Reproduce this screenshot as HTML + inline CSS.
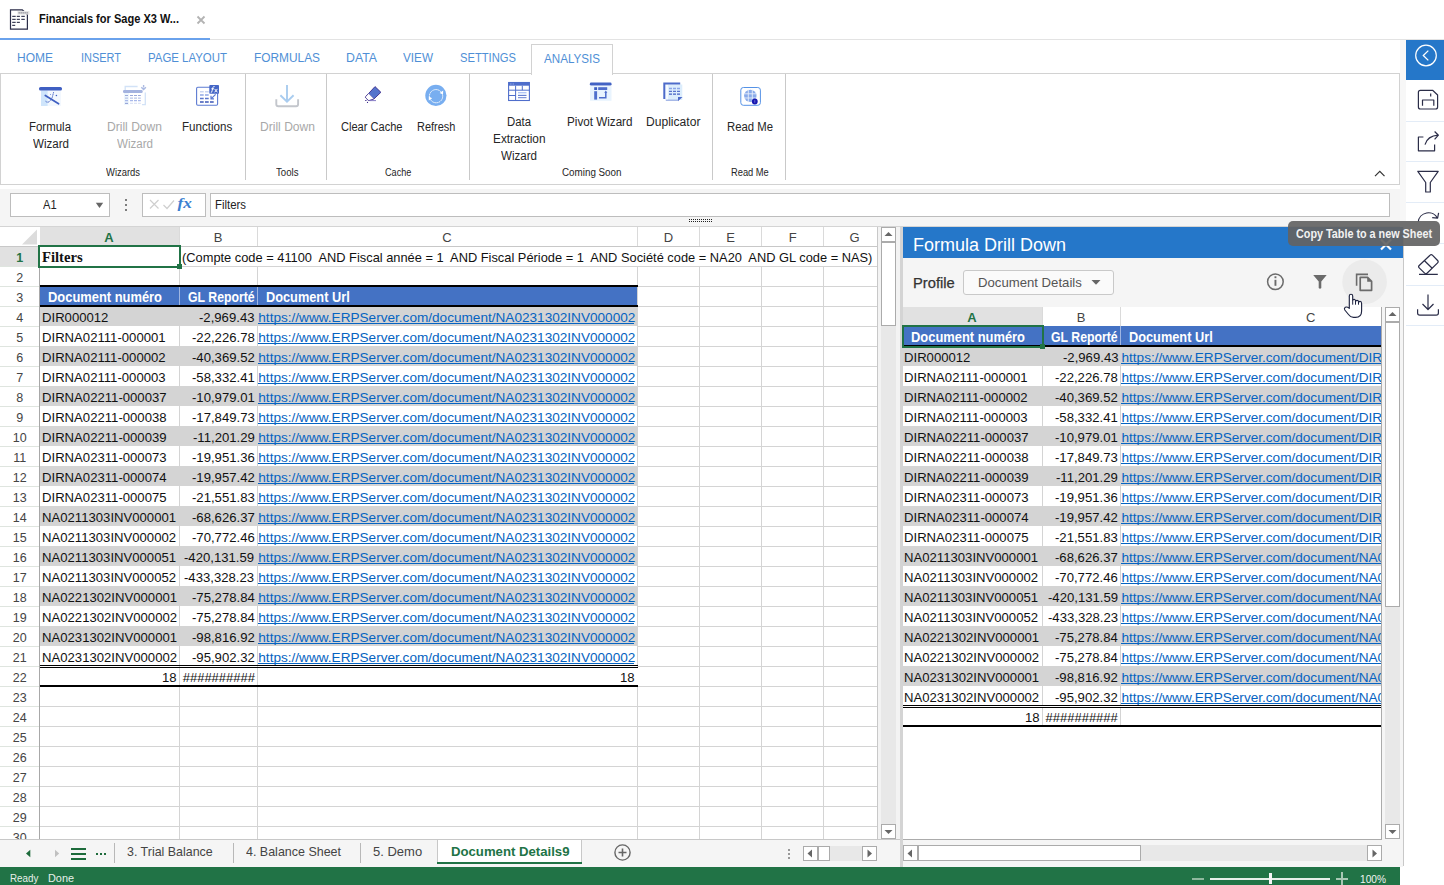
<!DOCTYPE html><html><head><meta charset="utf-8"><title>Financials</title><style>
*{box-sizing:border-box;margin:0;padding:0}
html,body{width:1444px;height:885px;overflow:hidden;background:#fff}
body{position:relative;font-family:"Liberation Sans",sans-serif}
.a{position:absolute}
.t{position:absolute;white-space:pre}
svg{position:absolute;overflow:visible}
</style></head><body><svg style="left:8px;top:7px" width="24" height="25" viewBox="8 7 24 25"><path d="M10.5 9.8 H22.3 L27.4 14.6 V29.1 H10.5 Z" fill="#fff" stroke="#2b2d48" stroke-width="1.2"/><rect x="17.5" y="11" width="12" height="3.6" fill="#e4e4e4"/><g fill="#8a8a96"><rect x="18.5" y="12.2" width="1.3" height="1.3"/><rect x="20.5" y="12.2" width="1.3" height="1.3"/><rect x="22.5" y="12.2" width="1.3" height="1.3"/><rect x="24.5" y="12.2" width="1.3" height="1.3"/><rect x="26.5" y="12.2" width="1.3" height="1.3"/></g><g fill="#2b2d48"><rect x="12.2" y="15.8" width="3.5" height="1.1"/><rect x="16.8" y="15.8" width="3.1" height="1.1"/><rect x="21.3" y="15.8" width="3.5" height="1.1"/><rect x="12.2" y="18.8" width="3.5" height="1.1"/><rect x="16.8" y="18.8" width="3.1" height="1.1"/><rect x="21.3" y="18.8" width="3.5" height="1.1"/><rect x="12.2" y="21.8" width="3.5" height="1.1"/><rect x="16.8" y="21.8" width="3.1" height="1.1"/><rect x="12.2" y="24.8" width="3" height="1.1"/></g></svg>
<div class="t " style="left:39.00px;top:12.84px;font-size:12px;line-height:12px;color:#111;font-weight:bold;transform:scaleX(0.9208);transform-origin:0 0;font-family:'Liberation Sans',sans-serif;">Financials for Sage X3 W...</div>
<svg style="left:196px;top:15px" width="10" height="10" viewBox="0 0 10 10"><path d="M1.5 1.5 L8.5 8.5 M8.5 1.5 L1.5 8.5" stroke="#b3b3b3" stroke-width="1.8"/></svg>
<div class="a" style="left:0px;top:39px;width:1444px;height:1px;background:#e3e3e3"></div>
<div class="a" style="left:0px;top:38px;width:210px;height:2px;background:#6aa2ec"></div>
<div class="t " style="left:17.00px;top:51.84px;font-size:12px;line-height:12px;color:#4f8fd6;font-family:'Liberation Sans',sans-serif;">HOME</div>
<div class="t " style="left:80.50px;top:51.84px;font-size:12px;line-height:12px;color:#4f8fd6;transform:scaleX(0.9135);transform-origin:0 0;font-family:'Liberation Sans',sans-serif;">INSERT</div>
<div class="t " style="left:148.00px;top:51.84px;font-size:12px;line-height:12px;color:#4f8fd6;transform:scaleX(0.9528);transform-origin:0 0;font-family:'Liberation Sans',sans-serif;">PAGE LAYOUT</div>
<div class="t " style="left:253.50px;top:51.84px;font-size:12px;line-height:12px;color:#4f8fd6;transform:scaleX(0.9899);transform-origin:0 0;font-family:'Liberation Sans',sans-serif;">FORMULAS</div>
<div class="t " style="left:346.00px;top:51.84px;font-size:12px;line-height:12px;color:#4f8fd6;transform:scaleX(1.0257);transform-origin:0 0;font-family:'Liberation Sans',sans-serif;">DATA</div>
<div class="t " style="left:403.00px;top:51.84px;font-size:12px;line-height:12px;color:#4f8fd6;transform:scaleX(0.9781);transform-origin:0 0;font-family:'Liberation Sans',sans-serif;">VIEW</div>
<div class="t " style="left:460.00px;top:51.84px;font-size:12px;line-height:12px;color:#4f8fd6;transform:scaleX(0.9332);transform-origin:0 0;font-family:'Liberation Sans',sans-serif;">SETTINGS</div>
<div class="a" style="left:531px;top:44px;width:82px;height:31px;background:#fff;border:1px solid #d2d2d2;border-bottom:none;z-index:2"></div>
<div class="t " style="left:544.00px;top:52.84px;font-size:12px;line-height:12px;color:#4f8fd6;transform:scaleX(0.9688);transform-origin:0 0;font-family:'Liberation Sans',sans-serif;z-index:3">ANALYSIS</div>
<div class="a" style="left:0px;top:73px;width:1400px;height:112px;border:1px solid #d2d2d2;background:#fff;z-index:1"></div>
<div class="a" style="left:245px;top:74px;width:1px;height:106px;background:#c9c9c9;z-index:1"></div>
<div class="a" style="left:326px;top:74px;width:1px;height:106px;background:#c9c9c9;z-index:1"></div>
<div class="a" style="left:469px;top:74px;width:1px;height:106px;background:#c9c9c9;z-index:1"></div>
<div class="a" style="left:712px;top:74px;width:1px;height:106px;background:#c9c9c9;z-index:1"></div>
<div class="a" style="left:785px;top:74px;width:1px;height:106px;background:#c9c9c9;z-index:1"></div>
<svg style="left:36px;top:84px;z-index:2;" width="30" height="26" viewBox="36 84 30 26"><rect x="41" y="90.5" width="6.8" height="15.5" fill="#cfe5fb"/><rect x="47.8" y="90.5" width="13.2" height="15.5" fill="#f3f8fe"/><rect x="39" y="87" width="23" height="3.6" rx="1.6" fill="#3f5fc2"/><path d="M45.3 95.5 L58.6 103.8" stroke="#3f5fc2" stroke-width="1.7" stroke-linecap="round"/><path d="M45.5 101.2 Q47 102.8 49 101.8 Q51.5 100 52.5 96.5 L53.6 92.2" stroke="#4a68c8" stroke-width="1" stroke-dasharray="1.6 0.6" fill="none"/><circle cx="56.4" cy="95.5" r="0.8" fill="#3f5fc2"/><circle cx="50.5" cy="94.4" r="0.5" fill="#6a85d6"/></svg>
<svg style="left:120px;top:82px;z-index:2;" width="30" height="26" viewBox="120 82 30 26"><rect x="124" y="93" width="5" height="12" fill="#eef6fd"/><path d="M125.2 90 V86.5 H137.6" stroke="#d2e2f7" stroke-width="1.3" fill="none"/><rect x="123" y="90" width="19.7" height="2.9" rx="1.2" fill="#a4b3df"/><path d="M143.6 85 V87.6 M141.3 87.3 L143.6 89.6 L145.9 87.3" stroke="#abbae2" stroke-width="1.4" fill="none"/><path d="M145.3 92.5 V104.7 H142" stroke="#d2e2f7" stroke-width="1.3" fill="none"/><g stroke-width="1.2"><path d="M125 95.5h3M130 95.5h3M134 95.5h3M138 95.5h2.8" stroke="#9ba9da"/><path d="M125 98.2h3M130 98.2h3M134 98.2h3M138 98.2h2.8" stroke="#b8c5e7"/><path d="M125 100.6h3M130 100.6h3M134 100.6h3M138 100.6h2.8" stroke="#a9b9ea"/><path d="M125 103.4h3" stroke="#98a6d8"/><path d="M130 103.4h3M134 103.4h3M138 103.4h2.8" stroke="#dfe5f5"/></g></svg>
<svg style="left:193px;top:82px;z-index:2;" width="30" height="26" viewBox="193 82 30 26"><rect x="196.6" y="87.3" width="21" height="18" rx="1.2" fill="#fff" stroke="#5c7bd2" stroke-width="1.1"/><g stroke-width="1.5"><path d="M200 91.7h3.7M205 91.7h3.7" stroke="#c9d5f1"/><path d="M200 95h3.7M205 95h3.7" stroke="#8ea7e5"/><path d="M200 98.6h3.7M205 98.6h3.7" stroke="#5a76cc"/><path d="M200 102h3.7M205 102h3.7M210 102h3.7" stroke="#3b56b6"/></g><path d="M215.6 94.3 L211.3 98.6 M211 95.8 V98.8 H214" stroke="#5a79d2" stroke-width="1.2" fill="none"/><rect x="209.3" y="85.1" width="9.7" height="8.6" rx="0.8" fill="#4566c6"/><path d="M210.8 92.6 Q211.8 92.8 212.2 90.5 L212.9 87.6 Q213.3 86.2 214.6 86.6 M211.3 88.8 H214" stroke="#fff" stroke-width="0.95" fill="none"/><path d="M214.6 88.9 L217.4 92.3 M217.4 88.9 L214.6 92.3" stroke="#fff" stroke-width="1"/></svg>
<svg style="left:272px;top:82px;z-index:2;" width="30" height="28" viewBox="272 82 30 28"><path d="M276.3 99.3 V104.3 Q276.3 106.3 278.3 106.3 H296.1 Q298.1 106.3 298.1 104.3 V99.3" stroke="#c3c6cc" stroke-width="1.9" fill="none"/><path d="M287 85 V101 M280.4 95.3 L287 101.7 L293.6 95.3" stroke="#a9ccef" stroke-width="1.9" fill="none"/></svg>
<svg style="left:360px;top:82px;z-index:2;" width="26" height="24" viewBox="360 82 26 24"><path d="M368.5 93.6 L375 86.6 L380.9 92.3 L373.9 99 Z" fill="#5574cc" stroke="#3d2d8c" stroke-width="0.9" stroke-linejoin="round"/><path d="M368.5 93.6 L365.7 96.4 Q365 97.2 365.8 98 L368.2 100.3 Q369 101 369.8 100.3 L373.9 99" fill="#fff" stroke="#3d2d8c" stroke-width="0.9" stroke-linejoin="round"/><path d="M369.5 100.6 H376" stroke="#7a6fc0" stroke-width="0.9"/><path d="M365 100.5 h1.6" stroke="#3d2d8c" stroke-width="0.8"/><circle cx="367.5" cy="102.4" r="0.6" fill="#3d2d8c"/></svg>
<svg style="left:423px;top:82px;z-index:2;" width="26" height="26" viewBox="423 82 26 26"><circle cx="435.9" cy="95.4" r="10.6" fill="#78aef0"/><path d="M429.5 97.2 A6.6 6.6 0 0 1 441.5 92.5 M442.5 94.5 A6.6 6.6 0 0 1 430.3 99.3" stroke="#fff" stroke-width="1" fill="none" stroke-dasharray="1.4 0.5"/><path d="M439.6 92.9 L443 94.6 L443.2 90.6 Z M432.2 98.2 L428.8 96.6 L428.8 100.4 Z" fill="#fff"/></svg>
<svg style="left:505px;top:79px;z-index:2;" width="28" height="25" viewBox="505 79 28 25"><rect x="508.6" y="82.5" width="20.8" height="18" fill="#fff" stroke="#4f6ecb" stroke-width="1.1"/><rect x="508.6" y="82.5" width="20.8" height="3.2" fill="#4f6ecb"/><path d="M510 84h0.7M511.6 84h0.7M513.2 84h0.7" stroke="#b9c8ee" stroke-width="0.9"/><path d="M515.6 85.7 V100.5 M522.3 85.7 V90.2 M508.6 90.2 H529.4 M508.6 95.5 H515.6" stroke="#4f6ecb" stroke-width="1"/><path d="M518 92.6 H526.5" stroke="#93b0f0" stroke-width="0.8"/><rect x="518" y="93" width="8.5" height="2" fill="#e1eafb"/><path d="M518 95.5 H526.5 M518 97.7 H526.5" stroke="#5672cc" stroke-width="0.9"/></svg>
<svg style="left:587px;top:79px;z-index:2;" width="28" height="25" viewBox="587 79 28 25"><rect x="590" y="86" width="21.5" height="14.8" fill="#e9f4fe"/><rect x="589.8" y="82.6" width="21.8" height="3" rx="1.4" fill="#4262c4"/><rect x="594.2" y="87.2" width="2.9" height="2.8" fill="#3e5ec2"/><rect x="598.2" y="87.2" width="9" height="2.8" fill="#4e6ccb"/><rect x="594.2" y="91.2" width="2.9" height="8.4" fill="#5070cc"/><path d="M599 97.8 H605.8 V92" stroke="#4e6ccb" stroke-width="1.5" fill="none"/><path d="M604.2 92.8 L605.8 90.5 L607.4 92.8 Z" fill="#4e6ccb"/></svg>
<svg style="left:659px;top:79px;z-index:2;" width="28" height="25" viewBox="659 79 28 25"><rect x="665.3" y="84.5" width="17" height="15.5" fill="#dcedfc"/><rect x="665.3" y="84.5" width="2.8" height="15.5" fill="#f6fbff"/><path d="M664.3 99 V83.5 H680.2" stroke="#4d6bca" stroke-width="2" fill="none"/><path d="M665.8 100.2 H678" stroke="#7f98dc" stroke-width="1"/><path d="M678 97 H682.5 L678 101.2 Z" fill="#4d6bca"/><g stroke-width="1.3"><path d="M669 88.5h3M673 88.5h3M677 88.5h3" stroke="#8aa5e8"/><path d="M669 91.3h3M673 91.3h3M677 91.3h3" stroke="#5873cc"/><path d="M669 94.2h3M673 94.2h3M677 94.2h3" stroke="#4360c2"/></g></svg>
<svg style="left:737px;top:84px;z-index:2;" width="28" height="25" viewBox="737 84 28 25"><rect x="740.8" y="87.5" width="19.6" height="17.8" rx="2.6" fill="#fff" stroke="#5592e6" stroke-width="1"/><circle cx="750.3" cy="95.9" r="6.2" fill="#8aabea"/><path d="M744 93.8 H756.6 M744 98 H756.6 M748.3 89.5 V102.3 M752.3 89.5 V102.3" stroke="#e8eefb" stroke-width="0.9"/><circle cx="754.8" cy="101.5" r="2.9" fill="#1616b0"/><rect x="754.5" y="100.2" width="0.7" height="2.5" fill="#8c8ce0"/></svg>
<div class="t " style="left:29.20px;top:120.54px;font-size:12px;line-height:12px;color:#262626;transform:scaleX(0.9543);transform-origin:0 0;font-family:'Liberation Sans',sans-serif;z-index:2">Formula</div>
<div class="t " style="left:32.50px;top:138.34px;font-size:12px;line-height:12px;color:#262626;transform:scaleX(0.9642);transform-origin:0 0;font-family:'Liberation Sans',sans-serif;z-index:2">Wizard</div>
<div class="t " style="left:107.00px;top:120.54px;font-size:12px;line-height:12px;color:#a8a8a8;transform:scaleX(1.0060);transform-origin:0 0;font-family:'Liberation Sans',sans-serif;z-index:2">Drill Down</div>
<div class="t " style="left:116.50px;top:138.34px;font-size:12px;line-height:12px;color:#a8a8a8;transform:scaleX(0.9642);transform-origin:0 0;font-family:'Liberation Sans',sans-serif;z-index:2">Wizard</div>
<div class="t " style="left:182.15px;top:120.54px;font-size:12px;line-height:12px;color:#262626;transform:scaleX(0.9669);transform-origin:0 0;font-family:'Liberation Sans',sans-serif;z-index:2">Functions</div>
<div class="t " style="left:259.50px;top:120.54px;font-size:12px;line-height:12px;color:#a8a8a8;transform:scaleX(1.0060);transform-origin:0 0;font-family:'Liberation Sans',sans-serif;z-index:2">Drill Down</div>
<div class="t " style="left:340.75px;top:120.64px;font-size:12px;line-height:12px;color:#262626;transform:scaleX(0.9221);transform-origin:0 0;font-family:'Liberation Sans',sans-serif;z-index:2">Clear Cache</div>
<div class="t " style="left:416.55px;top:120.64px;font-size:12px;line-height:12px;color:#262626;transform:scaleX(0.9115);transform-origin:0 0;font-family:'Liberation Sans',sans-serif;z-index:2">Refresh</div>
<div class="t " style="left:507.00px;top:115.84px;font-size:12px;line-height:12px;color:#262626;transform:scaleX(0.9469);transform-origin:0 0;font-family:'Liberation Sans',sans-serif;z-index:2">Data</div>
<div class="t " style="left:492.75px;top:133.34px;font-size:12px;line-height:12px;color:#262626;transform:scaleX(0.9840);transform-origin:0 0;font-family:'Liberation Sans',sans-serif;z-index:2">Extraction</div>
<div class="t " style="left:501.00px;top:150.04px;font-size:12px;line-height:12px;color:#262626;transform:scaleX(0.9642);transform-origin:0 0;font-family:'Liberation Sans',sans-serif;z-index:2">Wizard</div>
<div class="t " style="left:567.45px;top:115.64px;font-size:12px;line-height:12px;color:#262626;transform:scaleX(0.9726);transform-origin:0 0;font-family:'Liberation Sans',sans-serif;z-index:2">Pivot Wizard</div>
<div class="t " style="left:646.00px;top:115.84px;font-size:12px;line-height:12px;color:#262626;transform:scaleX(1.0070);transform-origin:0 0;font-family:'Liberation Sans',sans-serif;z-index:2">Duplicator</div>
<div class="t " style="left:726.70px;top:120.64px;font-size:12px;line-height:12px;color:#262626;transform:scaleX(0.9447);transform-origin:0 0;font-family:'Liberation Sans',sans-serif;z-index:2">Read Me</div>
<div class="t " style="left:106.40px;top:167.53px;font-size:10px;line-height:10px;color:#262626;transform:scaleX(0.9415);transform-origin:0 0;font-family:'Liberation Sans',sans-serif;z-index:2">Wizards</div>
<div class="t " style="left:275.75px;top:167.53px;font-size:10px;line-height:10px;color:#262626;transform:scaleX(0.9639);transform-origin:0 0;font-family:'Liberation Sans',sans-serif;z-index:2">Tools</div>
<div class="t " style="left:385.35px;top:167.53px;font-size:10px;line-height:10px;color:#262626;transform:scaleX(0.9099);transform-origin:0 0;font-family:'Liberation Sans',sans-serif;z-index:2">Cache</div>
<div class="t " style="left:561.75px;top:167.53px;font-size:10px;line-height:10px;color:#262626;transform:scaleX(0.9821);transform-origin:0 0;font-family:'Liberation Sans',sans-serif;z-index:2">Coming Soon</div>
<div class="t " style="left:730.80px;top:167.53px;font-size:10px;line-height:10px;color:#262626;transform:scaleX(0.9316);transform-origin:0 0;font-family:'Liberation Sans',sans-serif;z-index:2">Read Me</div>
<svg style="left:1373px;top:169px;z-index:2" width="14" height="9" viewBox="0 0 14 9"><path d="M2 7.2 L6.8 2.3 L11.5 7.2" stroke="#333" stroke-width="1.2" fill="none"/></svg>
<div class="a" style="left:0px;top:189px;width:1400px;height:37px;background:#f5f5f5"></div>
<div class="a" style="left:0px;top:226px;width:1400px;height:1px;background:#d4d4d4"></div>
<div class="a" style="left:10px;top:193px;width:100px;height:24px;background:#fff;border:1px solid #bdbdbd"></div>
<div class="t " style="left:43.20px;top:199.42px;font-size:12.5px;line-height:12.5px;color:#222;transform:scaleX(0.8895);transform-origin:0 0;font-family:'Liberation Sans',sans-serif;">A1</div>
<svg style="left:95px;top:202px" width="9" height="7" viewBox="0 0 9 7"><path d="M0.8 0.8 H8.2 L4.5 6 Z" fill="#666"/></svg>
<div class="a" style="left:125px;top:199px;width:2.2px;height:2.2px;background:#555;border-radius:1px"></div>
<div class="a" style="left:125px;top:204px;width:2.2px;height:2.2px;background:#555;border-radius:1px"></div>
<div class="a" style="left:125px;top:209px;width:2.2px;height:2.2px;background:#555;border-radius:1px"></div>
<div class="a" style="left:142px;top:193px;width:64px;height:24px;background:#fff;border:1px solid #bdbdbd"></div>
<svg style="left:148px;top:197px" width="52" height="16" viewBox="148 197 52 16"><path d="M150 200 L158.5 208.5 M158.5 200 L150 208.5" stroke="#cfcfcf" stroke-width="1.2"/><path d="M163.5 205 L167 208.5 L174 200.5" stroke="#cfcfcf" stroke-width="1.2" fill="none"/><text x="177.5" y="208" font-family="Liberation Serif" font-style="italic" font-weight="bold" font-size="15" fill="#3b7fd0" transform="translate(177.5 0) scale(1.15 1) translate(-177.5 0)">fx</text></svg>
<div class="a" style="left:210px;top:193px;width:1180px;height:24px;background:#fff;border:1px solid #bdbdbd"></div>
<div class="t " style="left:214.50px;top:198.84px;font-size:12px;line-height:12px;color:#222;transform:scaleX(0.9490);transform-origin:0 0;font-family:'Liberation Sans',sans-serif;">Filters</div>
<svg style="left:688px;top:219px" width="24" height="4" viewBox="0 0 24 4"><g fill="#222"><rect x="1" y="0" width="1" height="1"/><rect x="1" y="2" width="1" height="1"/><rect x="3" y="0" width="1" height="1"/><rect x="3" y="2" width="1" height="1"/><rect x="5" y="0" width="1" height="1"/><rect x="5" y="2" width="1" height="1"/><rect x="7" y="0" width="1" height="1"/><rect x="7" y="2" width="1" height="1"/><rect x="9" y="0" width="1" height="1"/><rect x="9" y="2" width="1" height="1"/><rect x="11" y="0" width="1" height="1"/><rect x="11" y="2" width="1" height="1"/><rect x="13" y="0" width="1" height="1"/><rect x="13" y="2" width="1" height="1"/><rect x="15" y="0" width="1" height="1"/><rect x="15" y="2" width="1" height="1"/><rect x="17" y="0" width="1" height="1"/><rect x="17" y="2" width="1" height="1"/><rect x="19" y="0" width="1" height="1"/><rect x="19" y="2" width="1" height="1"/><rect x="21" y="0" width="1" height="1"/><rect x="21" y="2" width="1" height="1"/><rect x="23" y="0" width="1" height="1"/><rect x="23" y="2" width="1" height="1"/></g></svg>
<div class="a" style="left:0px;top:227px;width:878px;height:613px;background:#fff"></div>
<div class="a" style="left:40px;top:227px;width:139px;height:19px;background:#e1e1e1"></div>
<div class="a" style="left:0px;top:246px;width:878px;height:1px;background:#c8c8c8"></div>
<svg style="left:20px;top:228px" width="18" height="17" viewBox="0 0 18 17"><path d="M17 1.5 V16.5 H2 Z" fill="#dcdcdc"/></svg>
<div class="a" style="left:179px;top:227px;width:1px;height:19px;background:#dadada"></div>
<div class="a" style="left:257px;top:227px;width:1px;height:19px;background:#dadada"></div>
<div class="a" style="left:637px;top:227px;width:1px;height:19px;background:#dadada"></div>
<div class="a" style="left:699px;top:227px;width:1px;height:19px;background:#dadada"></div>
<div class="a" style="left:761px;top:227px;width:1px;height:19px;background:#dadada"></div>
<div class="a" style="left:823px;top:227px;width:1px;height:19px;background:#dadada"></div>
<div class="a" style="left:877px;top:227px;width:1px;height:613px;background:#c8c8c8"></div>
<div class="t " style="left:104.31px;top:231.00px;font-size:13px;line-height:13px;color:#217346;font-weight:bold;font-family:'Liberation Sans',sans-serif;">A</div>
<div class="t " style="left:213.66px;top:231.00px;font-size:13px;line-height:13px;color:#444;font-family:'Liberation Sans',sans-serif;">B</div>
<div class="t " style="left:442.31px;top:231.00px;font-size:13px;line-height:13px;color:#444;font-family:'Liberation Sans',sans-serif;">C</div>
<div class="t " style="left:663.81px;top:231.00px;font-size:13px;line-height:13px;color:#444;font-family:'Liberation Sans',sans-serif;">D</div>
<div class="t " style="left:726.16px;top:231.00px;font-size:13px;line-height:13px;color:#444;font-family:'Liberation Sans',sans-serif;">E</div>
<div class="t " style="left:788.83px;top:231.00px;font-size:13px;line-height:13px;color:#444;font-family:'Liberation Sans',sans-serif;">F</div>
<div class="t " style="left:849.54px;top:231.00px;font-size:13px;line-height:13px;color:#444;font-family:'Liberation Sans',sans-serif;">G</div>
<div class="a" style="left:39px;top:246px;width:1px;height:594px;background:#a8a8a8"></div>
<div class="a" style="left:0px;top:246px;width:39px;height:20px;background:#e1e1e1"></div>
<div class="t " style="left:16.32px;top:252.42px;font-size:12.5px;line-height:12.5px;color:#217346;font-weight:bold;font-family:'Liberation Sans',sans-serif;">1</div>
<div class="a" style="left:0px;top:266px;width:39px;height:1px;background:#dfe5df"></div>
<div class="t " style="left:16.32px;top:272.42px;font-size:12.5px;line-height:12.5px;color:#444;font-family:'Liberation Sans',sans-serif;">2</div>
<div class="a" style="left:0px;top:286px;width:39px;height:1px;background:#dfe5df"></div>
<div class="t " style="left:16.32px;top:292.42px;font-size:12.5px;line-height:12.5px;color:#444;font-family:'Liberation Sans',sans-serif;">3</div>
<div class="a" style="left:0px;top:306px;width:39px;height:1px;background:#dfe5df"></div>
<div class="t " style="left:16.32px;top:312.42px;font-size:12.5px;line-height:12.5px;color:#444;font-family:'Liberation Sans',sans-serif;">4</div>
<div class="a" style="left:0px;top:326px;width:39px;height:1px;background:#dfe5df"></div>
<div class="t " style="left:16.32px;top:332.42px;font-size:12.5px;line-height:12.5px;color:#444;font-family:'Liberation Sans',sans-serif;">5</div>
<div class="a" style="left:0px;top:346px;width:39px;height:1px;background:#dfe5df"></div>
<div class="t " style="left:16.32px;top:352.42px;font-size:12.5px;line-height:12.5px;color:#444;font-family:'Liberation Sans',sans-serif;">6</div>
<div class="a" style="left:0px;top:366px;width:39px;height:1px;background:#dfe5df"></div>
<div class="t " style="left:16.32px;top:372.42px;font-size:12.5px;line-height:12.5px;color:#444;font-family:'Liberation Sans',sans-serif;">7</div>
<div class="a" style="left:0px;top:386px;width:39px;height:1px;background:#dfe5df"></div>
<div class="t " style="left:16.32px;top:392.42px;font-size:12.5px;line-height:12.5px;color:#444;font-family:'Liberation Sans',sans-serif;">8</div>
<div class="a" style="left:0px;top:406px;width:39px;height:1px;background:#dfe5df"></div>
<div class="t " style="left:16.32px;top:412.42px;font-size:12.5px;line-height:12.5px;color:#444;font-family:'Liberation Sans',sans-serif;">9</div>
<div class="a" style="left:0px;top:426px;width:39px;height:1px;background:#dfe5df"></div>
<div class="t " style="left:12.85px;top:432.42px;font-size:12.5px;line-height:12.5px;color:#444;font-family:'Liberation Sans',sans-serif;">10</div>
<div class="a" style="left:0px;top:446px;width:39px;height:1px;background:#dfe5df"></div>
<div class="t " style="left:13.31px;top:452.42px;font-size:12.5px;line-height:12.5px;color:#444;font-family:'Liberation Sans',sans-serif;">11</div>
<div class="a" style="left:0px;top:466px;width:39px;height:1px;background:#dfe5df"></div>
<div class="t " style="left:12.85px;top:472.42px;font-size:12.5px;line-height:12.5px;color:#444;font-family:'Liberation Sans',sans-serif;">12</div>
<div class="a" style="left:0px;top:486px;width:39px;height:1px;background:#dfe5df"></div>
<div class="t " style="left:12.85px;top:492.42px;font-size:12.5px;line-height:12.5px;color:#444;font-family:'Liberation Sans',sans-serif;">13</div>
<div class="a" style="left:0px;top:506px;width:39px;height:1px;background:#dfe5df"></div>
<div class="t " style="left:12.85px;top:512.42px;font-size:12.5px;line-height:12.5px;color:#444;font-family:'Liberation Sans',sans-serif;">14</div>
<div class="a" style="left:0px;top:526px;width:39px;height:1px;background:#dfe5df"></div>
<div class="t " style="left:12.85px;top:532.42px;font-size:12.5px;line-height:12.5px;color:#444;font-family:'Liberation Sans',sans-serif;">15</div>
<div class="a" style="left:0px;top:546px;width:39px;height:1px;background:#dfe5df"></div>
<div class="t " style="left:12.85px;top:552.42px;font-size:12.5px;line-height:12.5px;color:#444;font-family:'Liberation Sans',sans-serif;">16</div>
<div class="a" style="left:0px;top:566px;width:39px;height:1px;background:#dfe5df"></div>
<div class="t " style="left:12.85px;top:572.42px;font-size:12.5px;line-height:12.5px;color:#444;font-family:'Liberation Sans',sans-serif;">17</div>
<div class="a" style="left:0px;top:586px;width:39px;height:1px;background:#dfe5df"></div>
<div class="t " style="left:12.85px;top:592.42px;font-size:12.5px;line-height:12.5px;color:#444;font-family:'Liberation Sans',sans-serif;">18</div>
<div class="a" style="left:0px;top:606px;width:39px;height:1px;background:#dfe5df"></div>
<div class="t " style="left:12.85px;top:612.42px;font-size:12.5px;line-height:12.5px;color:#444;font-family:'Liberation Sans',sans-serif;">19</div>
<div class="a" style="left:0px;top:626px;width:39px;height:1px;background:#dfe5df"></div>
<div class="t " style="left:12.85px;top:632.42px;font-size:12.5px;line-height:12.5px;color:#444;font-family:'Liberation Sans',sans-serif;">20</div>
<div class="a" style="left:0px;top:646px;width:39px;height:1px;background:#dfe5df"></div>
<div class="t " style="left:12.85px;top:652.42px;font-size:12.5px;line-height:12.5px;color:#444;font-family:'Liberation Sans',sans-serif;">21</div>
<div class="a" style="left:0px;top:666px;width:39px;height:1px;background:#dfe5df"></div>
<div class="t " style="left:12.85px;top:672.42px;font-size:12.5px;line-height:12.5px;color:#444;font-family:'Liberation Sans',sans-serif;">22</div>
<div class="a" style="left:0px;top:686px;width:39px;height:1px;background:#dfe5df"></div>
<div class="t " style="left:12.85px;top:692.42px;font-size:12.5px;line-height:12.5px;color:#444;font-family:'Liberation Sans',sans-serif;">23</div>
<div class="a" style="left:0px;top:706px;width:39px;height:1px;background:#dfe5df"></div>
<div class="t " style="left:12.85px;top:712.42px;font-size:12.5px;line-height:12.5px;color:#444;font-family:'Liberation Sans',sans-serif;">24</div>
<div class="a" style="left:0px;top:726px;width:39px;height:1px;background:#dfe5df"></div>
<div class="t " style="left:12.85px;top:732.42px;font-size:12.5px;line-height:12.5px;color:#444;font-family:'Liberation Sans',sans-serif;">25</div>
<div class="a" style="left:0px;top:746px;width:39px;height:1px;background:#dfe5df"></div>
<div class="t " style="left:12.85px;top:752.42px;font-size:12.5px;line-height:12.5px;color:#444;font-family:'Liberation Sans',sans-serif;">26</div>
<div class="a" style="left:0px;top:766px;width:39px;height:1px;background:#dfe5df"></div>
<div class="t " style="left:12.85px;top:772.42px;font-size:12.5px;line-height:12.5px;color:#444;font-family:'Liberation Sans',sans-serif;">27</div>
<div class="a" style="left:0px;top:786px;width:39px;height:1px;background:#dfe5df"></div>
<div class="t " style="left:12.85px;top:792.42px;font-size:12.5px;line-height:12.5px;color:#444;font-family:'Liberation Sans',sans-serif;">28</div>
<div class="a" style="left:0px;top:806px;width:39px;height:1px;background:#dfe5df"></div>
<div class="t " style="left:12.85px;top:812.42px;font-size:12.5px;line-height:12.5px;color:#444;font-family:'Liberation Sans',sans-serif;">29</div>
<div class="a" style="left:0px;top:826px;width:39px;height:1px;background:#dfe5df"></div>
<div class="t " style="left:12.85px;top:832.42px;font-size:12.5px;line-height:12.5px;color:#444;font-family:'Liberation Sans',sans-serif;">30</div>
<div class="a" style="left:40px;top:266px;width:837px;height:1px;background:#d4d4d4"></div>
<div class="a" style="left:40px;top:286px;width:837px;height:1px;background:#d4d4d4"></div>
<div class="a" style="left:638px;top:306px;width:239px;height:1px;background:#d4d4d4"></div>
<div class="a" style="left:638px;top:326px;width:239px;height:1px;background:#d4d4d4"></div>
<div class="a" style="left:638px;top:346px;width:239px;height:1px;background:#d4d4d4"></div>
<div class="a" style="left:638px;top:366px;width:239px;height:1px;background:#d4d4d4"></div>
<div class="a" style="left:638px;top:386px;width:239px;height:1px;background:#d4d4d4"></div>
<div class="a" style="left:638px;top:406px;width:239px;height:1px;background:#d4d4d4"></div>
<div class="a" style="left:638px;top:426px;width:239px;height:1px;background:#d4d4d4"></div>
<div class="a" style="left:638px;top:446px;width:239px;height:1px;background:#d4d4d4"></div>
<div class="a" style="left:638px;top:466px;width:239px;height:1px;background:#d4d4d4"></div>
<div class="a" style="left:638px;top:486px;width:239px;height:1px;background:#d4d4d4"></div>
<div class="a" style="left:638px;top:506px;width:239px;height:1px;background:#d4d4d4"></div>
<div class="a" style="left:638px;top:526px;width:239px;height:1px;background:#d4d4d4"></div>
<div class="a" style="left:638px;top:546px;width:239px;height:1px;background:#d4d4d4"></div>
<div class="a" style="left:638px;top:566px;width:239px;height:1px;background:#d4d4d4"></div>
<div class="a" style="left:638px;top:586px;width:239px;height:1px;background:#d4d4d4"></div>
<div class="a" style="left:638px;top:606px;width:239px;height:1px;background:#d4d4d4"></div>
<div class="a" style="left:638px;top:626px;width:239px;height:1px;background:#d4d4d4"></div>
<div class="a" style="left:638px;top:646px;width:239px;height:1px;background:#d4d4d4"></div>
<div class="a" style="left:638px;top:666px;width:239px;height:1px;background:#d4d4d4"></div>
<div class="a" style="left:40px;top:686px;width:837px;height:1px;background:#d4d4d4"></div>
<div class="a" style="left:40px;top:706px;width:837px;height:1px;background:#d4d4d4"></div>
<div class="a" style="left:40px;top:726px;width:837px;height:1px;background:#d4d4d4"></div>
<div class="a" style="left:40px;top:746px;width:837px;height:1px;background:#d4d4d4"></div>
<div class="a" style="left:40px;top:766px;width:837px;height:1px;background:#d4d4d4"></div>
<div class="a" style="left:40px;top:786px;width:837px;height:1px;background:#d4d4d4"></div>
<div class="a" style="left:40px;top:806px;width:837px;height:1px;background:#d4d4d4"></div>
<div class="a" style="left:40px;top:826px;width:837px;height:1px;background:#d4d4d4"></div>
<div class="a" style="left:0px;top:246px;width:878px;height:1px;background:#c8c8c8"></div>
<div class="a" style="left:179px;top:247px;width:1px;height:593px;background:#d4d4d4"></div>
<div class="a" style="left:257px;top:247px;width:1px;height:593px;background:#d4d4d4"></div>
<div class="a" style="left:637px;top:247px;width:1px;height:593px;background:#d4d4d4"></div>
<div class="a" style="left:699px;top:247px;width:1px;height:593px;background:#d4d4d4"></div>
<div class="a" style="left:761px;top:247px;width:1px;height:593px;background:#d4d4d4"></div>
<div class="a" style="left:823px;top:247px;width:1px;height:593px;background:#d4d4d4"></div>
<div class="a" style="left:40px;top:306px;width:597px;height:20px;background:#d4d4d4"></div>
<div class="a" style="left:40px;top:346px;width:597px;height:20px;background:#d4d4d4"></div>
<div class="a" style="left:40px;top:386px;width:597px;height:20px;background:#d4d4d4"></div>
<div class="a" style="left:40px;top:426px;width:597px;height:20px;background:#d4d4d4"></div>
<div class="a" style="left:40px;top:466px;width:597px;height:20px;background:#d4d4d4"></div>
<div class="a" style="left:40px;top:506px;width:597px;height:20px;background:#d4d4d4"></div>
<div class="a" style="left:40px;top:546px;width:597px;height:20px;background:#d4d4d4"></div>
<div class="a" style="left:40px;top:586px;width:597px;height:20px;background:#d4d4d4"></div>
<div class="a" style="left:40px;top:626px;width:597px;height:20px;background:#d4d4d4"></div>
<div class="a" style="left:40px;top:285px;width:598px;height:2px;background:#000"></div>
<div class="a" style="left:40px;top:287px;width:597px;height:18px;background:#4472c4"></div>
<div class="a" style="left:179px;top:287px;width:1px;height:18px;background:#9fb6e2"></div>
<div class="a" style="left:257px;top:287px;width:1px;height:18px;background:#9fb6e2"></div>
<div class="a" style="left:40px;top:305px;width:598px;height:2px;background:#000"></div>
<div class="t " style="left:48.00px;top:290.15px;font-size:14px;line-height:14px;color:#fff;font-weight:bold;transform:scaleX(0.9218);transform-origin:0 0;font-family:'Liberation Sans',sans-serif;">Document numéro</div>
<div class="t " style="left:187.70px;top:290.15px;font-size:14px;line-height:14px;color:#fff;font-weight:bold;transform:scaleX(0.8779);transform-origin:0 0;font-family:'Liberation Sans',sans-serif;">GL Reporté</div>
<div class="t " style="left:266.30px;top:290.15px;font-size:14px;line-height:14px;color:#fff;font-weight:bold;transform:scaleX(0.9119);transform-origin:0 0;font-family:'Liberation Sans',sans-serif;">Document Url</div>
<div class="t " style="left:41.60px;top:311.00px;font-size:13px;line-height:13px;color:#111;transform:scaleX(1.0100);transform-origin:0 0;font-family:'Liberation Sans',sans-serif;">DIR000012</div>
<div class="t " style="left:199.02px;top:311.00px;font-size:13px;line-height:13px;color:#111;transform:scaleX(1.0100);transform-origin:0 0;font-family:'Liberation Sans',sans-serif;">-2,969.43</div>
<div class="t " style="left:258.30px;top:310.99px;font-size:13.6px;line-height:13.6px;color:#0563c1;font-family:'Liberation Sans',sans-serif;">https://www.ERPServer.com/document/NA0231302INV000002</div>
<div class="a" style="left:258px;top:323px;width:376px;height:1px;background:#0563c1"></div>
<div class="t " style="left:41.60px;top:331.00px;font-size:13px;line-height:13px;color:#111;transform:scaleX(1.0100);transform-origin:0 0;font-family:'Liberation Sans',sans-serif;">DIRNA02111-000001</div>
<div class="t " style="left:191.72px;top:331.00px;font-size:13px;line-height:13px;color:#111;transform:scaleX(1.0100);transform-origin:0 0;font-family:'Liberation Sans',sans-serif;">-22,226.78</div>
<div class="t " style="left:258.30px;top:330.99px;font-size:13.6px;line-height:13.6px;color:#0563c1;font-family:'Liberation Sans',sans-serif;">https://www.ERPServer.com/document/NA0231302INV000002</div>
<div class="a" style="left:258px;top:343px;width:376px;height:1px;background:#0563c1"></div>
<div class="t " style="left:41.60px;top:351.00px;font-size:13px;line-height:13px;color:#111;transform:scaleX(1.0100);transform-origin:0 0;font-family:'Liberation Sans',sans-serif;">DIRNA02111-000002</div>
<div class="t " style="left:191.72px;top:351.00px;font-size:13px;line-height:13px;color:#111;transform:scaleX(1.0100);transform-origin:0 0;font-family:'Liberation Sans',sans-serif;">-40,369.52</div>
<div class="t " style="left:258.30px;top:350.99px;font-size:13.6px;line-height:13.6px;color:#0563c1;font-family:'Liberation Sans',sans-serif;">https://www.ERPServer.com/document/NA0231302INV000002</div>
<div class="a" style="left:258px;top:363px;width:376px;height:1px;background:#0563c1"></div>
<div class="t " style="left:41.60px;top:371.00px;font-size:13px;line-height:13px;color:#111;transform:scaleX(1.0100);transform-origin:0 0;font-family:'Liberation Sans',sans-serif;">DIRNA02111-000003</div>
<div class="t " style="left:191.72px;top:371.00px;font-size:13px;line-height:13px;color:#111;transform:scaleX(1.0100);transform-origin:0 0;font-family:'Liberation Sans',sans-serif;">-58,332.41</div>
<div class="t " style="left:258.30px;top:370.99px;font-size:13.6px;line-height:13.6px;color:#0563c1;font-family:'Liberation Sans',sans-serif;">https://www.ERPServer.com/document/NA0231302INV000002</div>
<div class="a" style="left:258px;top:383px;width:376px;height:1px;background:#0563c1"></div>
<div class="t " style="left:41.60px;top:391.00px;font-size:13px;line-height:13px;color:#111;transform:scaleX(1.0100);transform-origin:0 0;font-family:'Liberation Sans',sans-serif;">DIRNA02211-000037</div>
<div class="t " style="left:191.72px;top:391.00px;font-size:13px;line-height:13px;color:#111;transform:scaleX(1.0100);transform-origin:0 0;font-family:'Liberation Sans',sans-serif;">-10,979.01</div>
<div class="t " style="left:258.30px;top:390.99px;font-size:13.6px;line-height:13.6px;color:#0563c1;font-family:'Liberation Sans',sans-serif;">https://www.ERPServer.com/document/NA0231302INV000002</div>
<div class="a" style="left:258px;top:403px;width:376px;height:1px;background:#0563c1"></div>
<div class="t " style="left:41.60px;top:411.00px;font-size:13px;line-height:13px;color:#111;transform:scaleX(1.0100);transform-origin:0 0;font-family:'Liberation Sans',sans-serif;">DIRNA02211-000038</div>
<div class="t " style="left:191.72px;top:411.00px;font-size:13px;line-height:13px;color:#111;transform:scaleX(1.0100);transform-origin:0 0;font-family:'Liberation Sans',sans-serif;">-17,849.73</div>
<div class="t " style="left:258.30px;top:410.99px;font-size:13.6px;line-height:13.6px;color:#0563c1;font-family:'Liberation Sans',sans-serif;">https://www.ERPServer.com/document/NA0231302INV000002</div>
<div class="a" style="left:258px;top:423px;width:376px;height:1px;background:#0563c1"></div>
<div class="t " style="left:41.60px;top:431.00px;font-size:13px;line-height:13px;color:#111;transform:scaleX(1.0100);transform-origin:0 0;font-family:'Liberation Sans',sans-serif;">DIRNA02211-000039</div>
<div class="t " style="left:192.69px;top:431.00px;font-size:13px;line-height:13px;color:#111;transform:scaleX(1.0100);transform-origin:0 0;font-family:'Liberation Sans',sans-serif;">-11,201.29</div>
<div class="t " style="left:258.30px;top:430.99px;font-size:13.6px;line-height:13.6px;color:#0563c1;font-family:'Liberation Sans',sans-serif;">https://www.ERPServer.com/document/NA0231302INV000002</div>
<div class="a" style="left:258px;top:443px;width:376px;height:1px;background:#0563c1"></div>
<div class="t " style="left:41.60px;top:451.00px;font-size:13px;line-height:13px;color:#111;transform:scaleX(1.0100);transform-origin:0 0;font-family:'Liberation Sans',sans-serif;">DIRNA02311-000073</div>
<div class="t " style="left:191.72px;top:451.00px;font-size:13px;line-height:13px;color:#111;transform:scaleX(1.0100);transform-origin:0 0;font-family:'Liberation Sans',sans-serif;">-19,951.36</div>
<div class="t " style="left:258.30px;top:450.99px;font-size:13.6px;line-height:13.6px;color:#0563c1;font-family:'Liberation Sans',sans-serif;">https://www.ERPServer.com/document/NA0231302INV000002</div>
<div class="a" style="left:258px;top:463px;width:376px;height:1px;background:#0563c1"></div>
<div class="t " style="left:41.60px;top:471.00px;font-size:13px;line-height:13px;color:#111;transform:scaleX(1.0100);transform-origin:0 0;font-family:'Liberation Sans',sans-serif;">DIRNA02311-000074</div>
<div class="t " style="left:191.72px;top:471.00px;font-size:13px;line-height:13px;color:#111;transform:scaleX(1.0100);transform-origin:0 0;font-family:'Liberation Sans',sans-serif;">-19,957.42</div>
<div class="t " style="left:258.30px;top:470.99px;font-size:13.6px;line-height:13.6px;color:#0563c1;font-family:'Liberation Sans',sans-serif;">https://www.ERPServer.com/document/NA0231302INV000002</div>
<div class="a" style="left:258px;top:483px;width:376px;height:1px;background:#0563c1"></div>
<div class="t " style="left:41.60px;top:491.00px;font-size:13px;line-height:13px;color:#111;transform:scaleX(1.0100);transform-origin:0 0;font-family:'Liberation Sans',sans-serif;">DIRNA02311-000075</div>
<div class="t " style="left:191.72px;top:491.00px;font-size:13px;line-height:13px;color:#111;transform:scaleX(1.0100);transform-origin:0 0;font-family:'Liberation Sans',sans-serif;">-21,551.83</div>
<div class="t " style="left:258.30px;top:490.99px;font-size:13.6px;line-height:13.6px;color:#0563c1;font-family:'Liberation Sans',sans-serif;">https://www.ERPServer.com/document/NA0231302INV000002</div>
<div class="a" style="left:258px;top:503px;width:376px;height:1px;background:#0563c1"></div>
<div class="t " style="left:41.60px;top:511.00px;font-size:13px;line-height:13px;color:#111;transform:scaleX(1.0100);transform-origin:0 0;font-family:'Liberation Sans',sans-serif;">NA0211303INV000001</div>
<div class="t " style="left:191.72px;top:511.00px;font-size:13px;line-height:13px;color:#111;transform:scaleX(1.0100);transform-origin:0 0;font-family:'Liberation Sans',sans-serif;">-68,626.37</div>
<div class="t " style="left:258.30px;top:510.99px;font-size:13.6px;line-height:13.6px;color:#0563c1;font-family:'Liberation Sans',sans-serif;">https://www.ERPServer.com/document/NA0231302INV000002</div>
<div class="a" style="left:258px;top:523px;width:376px;height:1px;background:#0563c1"></div>
<div class="t " style="left:41.60px;top:531.00px;font-size:13px;line-height:13px;color:#111;transform:scaleX(1.0100);transform-origin:0 0;font-family:'Liberation Sans',sans-serif;">NA0211303INV000002</div>
<div class="t " style="left:191.72px;top:531.00px;font-size:13px;line-height:13px;color:#111;transform:scaleX(1.0100);transform-origin:0 0;font-family:'Liberation Sans',sans-serif;">-70,772.46</div>
<div class="t " style="left:258.30px;top:530.99px;font-size:13.6px;line-height:13.6px;color:#0563c1;font-family:'Liberation Sans',sans-serif;">https://www.ERPServer.com/document/NA0231302INV000002</div>
<div class="a" style="left:258px;top:543px;width:376px;height:1px;background:#0563c1"></div>
<div class="t " style="left:41.60px;top:551.00px;font-size:13px;line-height:13px;color:#111;transform:scaleX(1.0100);transform-origin:0 0;font-family:'Liberation Sans',sans-serif;">NA0211303INV000051</div>
<div class="t " style="left:184.41px;top:551.00px;font-size:13px;line-height:13px;color:#111;transform:scaleX(1.0100);transform-origin:0 0;font-family:'Liberation Sans',sans-serif;">-420,131.59</div>
<div class="t " style="left:258.30px;top:550.99px;font-size:13.6px;line-height:13.6px;color:#0563c1;font-family:'Liberation Sans',sans-serif;">https://www.ERPServer.com/document/NA0231302INV000002</div>
<div class="a" style="left:258px;top:563px;width:376px;height:1px;background:#0563c1"></div>
<div class="t " style="left:41.60px;top:571.00px;font-size:13px;line-height:13px;color:#111;transform:scaleX(1.0100);transform-origin:0 0;font-family:'Liberation Sans',sans-serif;">NA0211303INV000052</div>
<div class="t " style="left:184.41px;top:571.00px;font-size:13px;line-height:13px;color:#111;transform:scaleX(1.0100);transform-origin:0 0;font-family:'Liberation Sans',sans-serif;">-433,328.23</div>
<div class="t " style="left:258.30px;top:570.99px;font-size:13.6px;line-height:13.6px;color:#0563c1;font-family:'Liberation Sans',sans-serif;">https://www.ERPServer.com/document/NA0231302INV000002</div>
<div class="a" style="left:258px;top:583px;width:376px;height:1px;background:#0563c1"></div>
<div class="t " style="left:41.60px;top:591.00px;font-size:13px;line-height:13px;color:#111;transform:scaleX(1.0100);transform-origin:0 0;font-family:'Liberation Sans',sans-serif;">NA0221302INV000001</div>
<div class="t " style="left:191.72px;top:591.00px;font-size:13px;line-height:13px;color:#111;transform:scaleX(1.0100);transform-origin:0 0;font-family:'Liberation Sans',sans-serif;">-75,278.84</div>
<div class="t " style="left:258.30px;top:590.99px;font-size:13.6px;line-height:13.6px;color:#0563c1;font-family:'Liberation Sans',sans-serif;">https://www.ERPServer.com/document/NA0231302INV000002</div>
<div class="a" style="left:258px;top:603px;width:376px;height:1px;background:#0563c1"></div>
<div class="t " style="left:41.60px;top:611.00px;font-size:13px;line-height:13px;color:#111;transform:scaleX(1.0100);transform-origin:0 0;font-family:'Liberation Sans',sans-serif;">NA0221302INV000002</div>
<div class="t " style="left:191.72px;top:611.00px;font-size:13px;line-height:13px;color:#111;transform:scaleX(1.0100);transform-origin:0 0;font-family:'Liberation Sans',sans-serif;">-75,278.84</div>
<div class="t " style="left:258.30px;top:610.99px;font-size:13.6px;line-height:13.6px;color:#0563c1;font-family:'Liberation Sans',sans-serif;">https://www.ERPServer.com/document/NA0231302INV000002</div>
<div class="a" style="left:258px;top:623px;width:376px;height:1px;background:#0563c1"></div>
<div class="t " style="left:41.60px;top:631.00px;font-size:13px;line-height:13px;color:#111;transform:scaleX(1.0100);transform-origin:0 0;font-family:'Liberation Sans',sans-serif;">NA0231302INV000001</div>
<div class="t " style="left:191.72px;top:631.00px;font-size:13px;line-height:13px;color:#111;transform:scaleX(1.0100);transform-origin:0 0;font-family:'Liberation Sans',sans-serif;">-98,816.92</div>
<div class="t " style="left:258.30px;top:630.99px;font-size:13.6px;line-height:13.6px;color:#0563c1;font-family:'Liberation Sans',sans-serif;">https://www.ERPServer.com/document/NA0231302INV000002</div>
<div class="a" style="left:258px;top:643px;width:376px;height:1px;background:#0563c1"></div>
<div class="t " style="left:41.60px;top:651.00px;font-size:13px;line-height:13px;color:#111;transform:scaleX(1.0100);transform-origin:0 0;font-family:'Liberation Sans',sans-serif;">NA0231302INV000002</div>
<div class="t " style="left:191.72px;top:651.00px;font-size:13px;line-height:13px;color:#111;transform:scaleX(1.0100);transform-origin:0 0;font-family:'Liberation Sans',sans-serif;">-95,902.32</div>
<div class="t " style="left:258.30px;top:650.99px;font-size:13.6px;line-height:13.6px;color:#0563c1;font-family:'Liberation Sans',sans-serif;">https://www.ERPServer.com/document/NA0231302INV000002</div>
<div class="a" style="left:258px;top:663px;width:376px;height:1px;background:#0563c1"></div>
<div class="a" style="left:40px;top:665px;width:598px;height:1px;background:#000"></div>
<div class="a" style="left:40px;top:667px;width:598px;height:1px;background:#000"></div>
<div class="a" style="left:40px;top:668px;width:598px;height:17px;background:#fff"></div>
<div class="a" style="left:179px;top:668px;width:1px;height:17px;background:#d4d4d4"></div>
<div class="a" style="left:257px;top:668px;width:1px;height:17px;background:#d4d4d4"></div>
<div class="a" style="left:40px;top:685px;width:598px;height:2px;background:#000"></div>
<div class="t " style="left:162.20px;top:671.00px;font-size:13px;line-height:13px;color:#111;transform:scaleX(1.0100);transform-origin:0 0;font-family:'Liberation Sans',sans-serif;">18</div>
<div class="t " style="left:182.70px;top:671.00px;font-size:13px;line-height:13px;color:#111;font-family:'Liberation Sans',sans-serif;">##########</div>
<div class="t " style="left:619.90px;top:671.00px;font-size:13px;line-height:13px;color:#111;transform:scaleX(1.0100);transform-origin:0 0;font-family:'Liberation Sans',sans-serif;">18</div>
<div class="a" style="left:180px;top:247px;width:697px;height:19px;background:#fff"></div>
<div class="t " style="left:181.60px;top:251.00px;font-size:13px;line-height:13px;color:#111;transform:scaleX(0.9875);transform-origin:0 0;font-family:'Liberation Sans',sans-serif;">(Compte code = 41100  AND Fiscal année = 1  AND Fiscal Période = 1  AND Société code = NA20  AND GL code = NAS)</div>
<div class="a" style="left:40px;top:247px;width:139px;height:19px;background:#fff"></div>
<div class="t " style="left:41.70px;top:250.44px;font-size:15px;line-height:15px;color:#111;font-weight:bold;transform:scaleX(0.9773);transform-origin:0 0;font-family:'Liberation Serif',serif;">Filters</div>
<div class="a" style="left:38px;top:245px;width:143px;height:23px;border:2px solid #217346"></div>
<div class="a" style="left:177px;top:264px;width:5px;height:5px;background:#217346"></div>
<div class="a" style="left:878px;top:227px;width:22px;height:613px;background:#f3f3f3"></div>
<div class="a" style="left:881px;top:227px;width:15px;height:613px;background:#e8e8e8"></div>
<div class="a" style="left:881px;top:227px;width:15px;height:15px;background:#fff;border:1px solid #ababab"></div>
<svg style="left:884px;top:231px" width="9" height="6" viewBox="0 0 9 6"><path d="M0.5 5 L4.5 1 L8.5 5 Z" fill="#666"/></svg>
<div class="a" style="left:881px;top:242px;width:15px;height:84px;background:#fff;border:1px solid #ababab"></div>
<div class="a" style="left:881px;top:824px;width:15px;height:15px;background:#fff;border:1px solid #ababab"></div>
<svg style="left:884px;top:829px" width="9" height="6" viewBox="0 0 9 6"><path d="M0.5 1 L4.5 5 L8.5 1 Z" fill="#666"/></svg>
<div class="a" style="left:900px;top:227px;width:3px;height:640px;background:#d4d4d4"></div>
<div class="a" style="left:0px;top:839px;width:900px;height:1px;background:#c8c8c8"></div>
<div class="a" style="left:0px;top:840px;width:900px;height:27px;background:#f5f5f5"></div>
<svg style="left:22px;top:847px" width="44" height="14" viewBox="0 0 44 14"><path d="M8.3 2.8 L4 6.5 L8.3 10.2 Z" fill="#1d6b3b"/><path d="M33 2.8 L37.2 6.5 L33 10.2 Z" fill="#c0c0c0"/></svg>
<div class="a" style="left:71px;top:848px;width:15px;height:2px;background:#1d6b3b"></div>
<div class="a" style="left:71px;top:853px;width:15px;height:2px;background:#1d6b3b"></div>
<div class="a" style="left:71px;top:858px;width:15px;height:2px;background:#1d6b3b"></div>
<div class="a" style="left:96px;top:853px;width:2px;height:2px;background:#1d6b3b"></div>
<div class="a" style="left:100px;top:853px;width:2px;height:2px;background:#1d6b3b"></div>
<div class="a" style="left:104px;top:853px;width:2px;height:2px;background:#1d6b3b"></div>
<div class="a" style="left:114px;top:843px;width:1px;height:20px;background:#b8b8b8"></div>
<div class="t " style="left:127.00px;top:845.30px;font-size:13px;line-height:13px;color:#444;transform:scaleX(0.9565);transform-origin:0 0;font-family:'Liberation Sans',sans-serif;">3. Trial Balance</div>
<div class="a" style="left:233px;top:843px;width:1px;height:20px;background:#b8b8b8"></div>
<div class="t " style="left:246.00px;top:845.30px;font-size:13px;line-height:13px;color:#444;transform:scaleX(0.9594);transform-origin:0 0;font-family:'Liberation Sans',sans-serif;">4. Balance Sheet</div>
<div class="a" style="left:360px;top:843px;width:1px;height:20px;background:#b8b8b8"></div>
<div class="t " style="left:373.00px;top:845.30px;font-size:13px;line-height:13px;color:#444;font-family:'Liberation Sans',sans-serif;">5. Demo</div>
<div class="a" style="left:437px;top:839px;width:145px;height:25px;background:#fff;border:1px solid #c8c8c8;border-top:none"></div>
<div class="a" style="left:437px;top:839px;width:145px;height:1px;background:#c8c8c8"></div>
<div class="a" style="left:437px;top:862px;width:145px;height:2px;background:#217346"></div>
<div class="t " style="left:450.80px;top:845.30px;font-size:13px;line-height:13px;color:#217346;font-weight:bold;transform:scaleX(1.0126);transform-origin:0 0;font-family:'Liberation Sans',sans-serif;">Document Details9</div>
<svg style="left:613px;top:843px" width="19" height="19" viewBox="0 0 19 19"><circle cx="9.5" cy="9.5" r="7.6" fill="none" stroke="#666" stroke-width="1.4"/><path d="M9.5 5.5 V13.5 M5.5 9.5 H13.5" stroke="#666" stroke-width="1.6"/></svg>
<div class="a" style="left:788px;top:849px;width:2px;height:2px;background:#999"></div>
<div class="a" style="left:788px;top:853px;width:2px;height:2px;background:#999"></div>
<div class="a" style="left:788px;top:857px;width:2px;height:2px;background:#999"></div>
<div class="a" style="left:803px;top:846px;width:74px;height:15px;background:#e8e8e8"></div>
<div class="a" style="left:803px;top:846px;width:15px;height:15px;background:#fff;border:1px solid #ababab"></div>
<svg style="left:806px;top:849px" width="8" height="9" viewBox="0 0 8 9"><path d="M6 0.5 L1.5 4.5 L6 8.5 Z" fill="#666"/></svg>
<div class="a" style="left:818px;top:846px;width:12px;height:15px;background:#fff;border:1px solid #ababab"></div>
<div class="a" style="left:862px;top:846px;width:15px;height:15px;background:#fff;border:1px solid #ababab"></div>
<svg style="left:866px;top:849px" width="8" height="9" viewBox="0 0 8 9"><path d="M1.5 0.5 L6 4.5 L1.5 8.5 Z" fill="#666"/></svg>
<div class="a" style="left:0px;top:867px;width:1400px;height:18px;background:#217346"></div>
<div class="t " style="left:10.00px;top:872.69px;font-size:11px;line-height:11px;color:#e8f0ea;transform:scaleX(0.8901);transform-origin:0 0;font-family:'Liberation Sans',sans-serif;">Ready</div>
<div class="t " style="left:48.00px;top:872.69px;font-size:11px;line-height:11px;color:#e8f0ea;transform:scaleX(0.9888);transform-origin:0 0;font-family:'Liberation Sans',sans-serif;">Done</div>
<div class="a" style="left:1192px;top:878px;width:12px;height:2px;background:#8fb89e"></div>
<div class="a" style="left:1210px;top:878px;width:120px;height:1.5px;background:#e6efe9"></div>
<div class="a" style="left:1269px;top:873px;width:3px;height:11px;background:#f5f5f5"></div>
<div class="a" style="left:1336px;top:878px;width:12px;height:2px;background:#a8c8b4"></div>
<div class="a" style="left:1341px;top:872px;width:2px;height:13px;background:#a8c8b4"></div>
<div class="t " style="left:1360.00px;top:873.69px;font-size:11px;line-height:11px;color:#f0f5f1;transform:scaleX(0.9242);transform-origin:0 0;font-family:'Liberation Sans',sans-serif;">100%</div>
<div class="a" style="left:903px;top:227px;width:500px;height:640px;background:#f5f5f5"></div>
<div class="a" style="left:1403px;top:227px;width:1px;height:639px;background:#c8c8c8"></div>
<div class="a" style="left:903px;top:227px;width:500px;height:31px;background:#2577c9"></div>
<div class="t " style="left:913.00px;top:235.76px;font-size:18px;line-height:18px;color:#fff;font-family:'Liberation Sans',sans-serif;">Formula Drill Down</div>
<svg style="left:1379px;top:238px" width="14" height="13" viewBox="0 0 14 13"><path d="M2 1.5 L12 11.5 M12 1.5 L2 11.5" stroke="#fff" stroke-width="2.2"/></svg>
<div class="t " style="left:913.00px;top:276.15px;font-size:14px;line-height:14px;color:#333;transform:scaleX(1.0508);transform-origin:0 0;font-family:'Liberation Sans',sans-serif;-webkit-text-stroke:0.25px #333">Profile</div>
<div class="a" style="left:963px;top:270px;width:151px;height:25px;background:#fafafa;border:1px solid #c9c9c9;border-radius:3px"></div>
<div class="t " style="left:978.00px;top:276.00px;font-size:13px;line-height:13px;color:#555;transform:scaleX(1.0117);transform-origin:0 0;font-family:'Liberation Sans',sans-serif;">Document Details</div>
<svg style="left:1090px;top:279px" width="12" height="7" viewBox="0 0 12 7"><path d="M1.5 1 H10.5 L6 5.8 Z" fill="#666"/></svg>
<svg style="left:1260px;top:266px" width="120" height="54" viewBox="1260 266 120 54"><circle cx="1275.4" cy="281.8" r="7.8" fill="none" stroke="#6b6b6b" stroke-width="1.5"/><rect x="1274.5" y="279.8" width="1.9" height="6" fill="#6b6b6b"/><rect x="1274.5" y="276.3" width="1.9" height="1.9" fill="#6b6b6b"/><path d="M1313.2 275 H1326.7 L1321.3 281.5 V288 Q1320 289.3 1318.7 288 V281.5 Z" fill="#6b6b6b"/><circle cx="1364.6" cy="281.8" r="22.3" fill="#ebebeb"/><path d="M1356.6 285.8 V274.4 H1368" stroke="#6b6b6b" stroke-width="1.6" fill="none"/><path d="M1360.2 277.3 H1367.6 L1371.6 281.3 V290.3 H1360.2 Z" fill="none" stroke="#6b6b6b" stroke-width="1.7" stroke-linejoin="round"/><path d="M1367.2 277.3 L1371.6 281.7 H1367.2 Z" fill="#6b6b6b"/></svg>
<div class="a" style="left:903px;top:307px;width:478px;height:532px;background:#fff"></div>
<div class="a" style="left:903px;top:307px;width:139px;height:19px;background:#e1e1e1"></div>
<div class="a" style="left:1042px;top:307px;width:1px;height:19px;background:#dadada"></div>
<div class="a" style="left:1120px;top:307px;width:1px;height:19px;background:#dadada"></div>
<div class="t " style="left:967.31px;top:311.00px;font-size:13px;line-height:13px;color:#217346;font-weight:bold;font-family:'Liberation Sans',sans-serif;">A</div>
<div class="t " style="left:1076.66px;top:311.00px;font-size:13px;line-height:13px;color:#444;font-family:'Liberation Sans',sans-serif;">B</div>
<div class="t " style="left:1306.01px;top:311.00px;font-size:13px;line-height:13px;color:#444;font-family:'Liberation Sans',sans-serif;">C</div>
<div class="a" style="left:903px;top:346px;width:478px;height:20px;background:#d4d4d4"></div>
<div class="a" style="left:903px;top:386px;width:478px;height:20px;background:#d4d4d4"></div>
<div class="a" style="left:903px;top:426px;width:478px;height:20px;background:#d4d4d4"></div>
<div class="a" style="left:903px;top:466px;width:478px;height:20px;background:#d4d4d4"></div>
<div class="a" style="left:903px;top:506px;width:478px;height:20px;background:#d4d4d4"></div>
<div class="a" style="left:903px;top:546px;width:478px;height:20px;background:#d4d4d4"></div>
<div class="a" style="left:903px;top:586px;width:478px;height:20px;background:#d4d4d4"></div>
<div class="a" style="left:903px;top:626px;width:478px;height:20px;background:#d4d4d4"></div>
<div class="a" style="left:903px;top:666px;width:478px;height:20px;background:#d4d4d4"></div>
<div class="a" style="left:1042px;top:366px;width:1px;height:20px;background:#d4d4d4"></div>
<div class="a" style="left:1120px;top:366px;width:1px;height:20px;background:#d4d4d4"></div>
<div class="a" style="left:1042px;top:406px;width:1px;height:20px;background:#d4d4d4"></div>
<div class="a" style="left:1120px;top:406px;width:1px;height:20px;background:#d4d4d4"></div>
<div class="a" style="left:1042px;top:446px;width:1px;height:20px;background:#d4d4d4"></div>
<div class="a" style="left:1120px;top:446px;width:1px;height:20px;background:#d4d4d4"></div>
<div class="a" style="left:1042px;top:486px;width:1px;height:20px;background:#d4d4d4"></div>
<div class="a" style="left:1120px;top:486px;width:1px;height:20px;background:#d4d4d4"></div>
<div class="a" style="left:1042px;top:526px;width:1px;height:20px;background:#d4d4d4"></div>
<div class="a" style="left:1120px;top:526px;width:1px;height:20px;background:#d4d4d4"></div>
<div class="a" style="left:1042px;top:566px;width:1px;height:20px;background:#d4d4d4"></div>
<div class="a" style="left:1120px;top:566px;width:1px;height:20px;background:#d4d4d4"></div>
<div class="a" style="left:1042px;top:606px;width:1px;height:20px;background:#d4d4d4"></div>
<div class="a" style="left:1120px;top:606px;width:1px;height:20px;background:#d4d4d4"></div>
<div class="a" style="left:1042px;top:646px;width:1px;height:20px;background:#d4d4d4"></div>
<div class="a" style="left:1120px;top:646px;width:1px;height:20px;background:#d4d4d4"></div>
<div class="a" style="left:1042px;top:686px;width:1px;height:20px;background:#d4d4d4"></div>
<div class="a" style="left:1120px;top:686px;width:1px;height:20px;background:#d4d4d4"></div>
<div class="a" style="left:903px;top:326px;width:478px;height:19px;background:#4472c4"></div>
<div class="a" style="left:1042px;top:326px;width:1px;height:19px;background:#9fb6e2"></div>
<div class="a" style="left:1120px;top:326px;width:1px;height:19px;background:#9fb6e2"></div>
<div class="a" style="left:903px;top:345px;width:478px;height:2px;background:#000"></div>
<div class="t " style="left:911.00px;top:330.15px;font-size:14px;line-height:14px;color:#fff;font-weight:bold;transform:scaleX(0.9218);transform-origin:0 0;font-family:'Liberation Sans',sans-serif;">Document numéro</div>
<div class="t " style="left:1050.50px;top:330.15px;font-size:14px;line-height:14px;color:#fff;font-weight:bold;transform:scaleX(0.8779);transform-origin:0 0;font-family:'Liberation Sans',sans-serif;">GL Reporté</div>
<div class="t " style="left:1129.00px;top:330.15px;font-size:14px;line-height:14px;color:#fff;font-weight:bold;transform:scaleX(0.9119);transform-origin:0 0;font-family:'Liberation Sans',sans-serif;">Document Url</div>
<div class="a" style="left:903px;top:307px;width:478px;height:532px;overflow:hidden">
<div class="t " style="left:218.50px;top:43.99px;font-size:13.6px;line-height:13.6px;color:#0563c1;font-family:'Liberation Sans',sans-serif;">https://www.ERPServer.com/document/DIR000012</div>
<div class="a" style="left:218px;top:56px;width:306px;height:1px;background:#0563c1"></div>
<div class="t " style="left:218.50px;top:63.99px;font-size:13.6px;line-height:13.6px;color:#0563c1;font-family:'Liberation Sans',sans-serif;">https://www.ERPServer.com/document/DIRNA02111-000001</div>
<div class="a" style="left:218px;top:76px;width:365px;height:1px;background:#0563c1"></div>
<div class="t " style="left:218.50px;top:83.99px;font-size:13.6px;line-height:13.6px;color:#0563c1;font-family:'Liberation Sans',sans-serif;">https://www.ERPServer.com/document/DIRNA02111-000002</div>
<div class="a" style="left:218px;top:96px;width:365px;height:1px;background:#0563c1"></div>
<div class="t " style="left:218.50px;top:103.99px;font-size:13.6px;line-height:13.6px;color:#0563c1;font-family:'Liberation Sans',sans-serif;">https://www.ERPServer.com/document/DIRNA02111-000003</div>
<div class="a" style="left:218px;top:116px;width:365px;height:1px;background:#0563c1"></div>
<div class="t " style="left:218.50px;top:123.99px;font-size:13.6px;line-height:13.6px;color:#0563c1;font-family:'Liberation Sans',sans-serif;">https://www.ERPServer.com/document/DIRNA02211-000037</div>
<div class="a" style="left:218px;top:136px;width:366px;height:1px;background:#0563c1"></div>
<div class="t " style="left:218.50px;top:143.99px;font-size:13.6px;line-height:13.6px;color:#0563c1;font-family:'Liberation Sans',sans-serif;">https://www.ERPServer.com/document/DIRNA02211-000038</div>
<div class="a" style="left:218px;top:156px;width:366px;height:1px;background:#0563c1"></div>
<div class="t " style="left:218.50px;top:163.99px;font-size:13.6px;line-height:13.6px;color:#0563c1;font-family:'Liberation Sans',sans-serif;">https://www.ERPServer.com/document/DIRNA02211-000039</div>
<div class="a" style="left:218px;top:176px;width:366px;height:1px;background:#0563c1"></div>
<div class="t " style="left:218.50px;top:183.99px;font-size:13.6px;line-height:13.6px;color:#0563c1;font-family:'Liberation Sans',sans-serif;">https://www.ERPServer.com/document/DIRNA02311-000073</div>
<div class="a" style="left:218px;top:196px;width:366px;height:1px;background:#0563c1"></div>
<div class="t " style="left:218.50px;top:203.99px;font-size:13.6px;line-height:13.6px;color:#0563c1;font-family:'Liberation Sans',sans-serif;">https://www.ERPServer.com/document/DIRNA02311-000074</div>
<div class="a" style="left:218px;top:216px;width:366px;height:1px;background:#0563c1"></div>
<div class="t " style="left:218.50px;top:223.99px;font-size:13.6px;line-height:13.6px;color:#0563c1;font-family:'Liberation Sans',sans-serif;">https://www.ERPServer.com/document/DIRNA02311-000075</div>
<div class="a" style="left:218px;top:236px;width:366px;height:1px;background:#0563c1"></div>
<div class="t " style="left:218.50px;top:243.99px;font-size:13.6px;line-height:13.6px;color:#0563c1;font-family:'Liberation Sans',sans-serif;">https://www.ERPServer.com/document/NA0211303INV000001</div>
<div class="a" style="left:218px;top:256px;width:375px;height:1px;background:#0563c1"></div>
<div class="t " style="left:218.50px;top:263.99px;font-size:13.6px;line-height:13.6px;color:#0563c1;font-family:'Liberation Sans',sans-serif;">https://www.ERPServer.com/document/NA0211303INV000002</div>
<div class="a" style="left:218px;top:276px;width:375px;height:1px;background:#0563c1"></div>
<div class="t " style="left:218.50px;top:283.99px;font-size:13.6px;line-height:13.6px;color:#0563c1;font-family:'Liberation Sans',sans-serif;">https://www.ERPServer.com/document/NA0211303INV000051</div>
<div class="a" style="left:218px;top:296px;width:375px;height:1px;background:#0563c1"></div>
<div class="t " style="left:218.50px;top:303.99px;font-size:13.6px;line-height:13.6px;color:#0563c1;font-family:'Liberation Sans',sans-serif;">https://www.ERPServer.com/document/NA0211303INV000052</div>
<div class="a" style="left:218px;top:316px;width:375px;height:1px;background:#0563c1"></div>
<div class="t " style="left:218.50px;top:323.99px;font-size:13.6px;line-height:13.6px;color:#0563c1;font-family:'Liberation Sans',sans-serif;">https://www.ERPServer.com/document/NA0221302INV000001</div>
<div class="a" style="left:218px;top:336px;width:377px;height:1px;background:#0563c1"></div>
<div class="t " style="left:218.50px;top:343.99px;font-size:13.6px;line-height:13.6px;color:#0563c1;font-family:'Liberation Sans',sans-serif;">https://www.ERPServer.com/document/NA0221302INV000002</div>
<div class="a" style="left:218px;top:356px;width:377px;height:1px;background:#0563c1"></div>
<div class="t " style="left:218.50px;top:363.99px;font-size:13.6px;line-height:13.6px;color:#0563c1;font-family:'Liberation Sans',sans-serif;">https://www.ERPServer.com/document/NA0231302INV000001</div>
<div class="a" style="left:218px;top:376px;width:377px;height:1px;background:#0563c1"></div>
<div class="t " style="left:218.50px;top:383.99px;font-size:13.6px;line-height:13.6px;color:#0563c1;font-family:'Liberation Sans',sans-serif;">https://www.ERPServer.com/document/NA0231302INV000002</div>
<div class="a" style="left:218px;top:396px;width:377px;height:1px;background:#0563c1"></div>
</div>
<div class="t " style="left:904.20px;top:351.00px;font-size:13px;line-height:13px;color:#111;transform:scaleX(1.0100);transform-origin:0 0;font-family:'Liberation Sans',sans-serif;">DIR000012</div>
<div class="t " style="left:1062.52px;top:351.00px;font-size:13px;line-height:13px;color:#111;transform:scaleX(1.0100);transform-origin:0 0;font-family:'Liberation Sans',sans-serif;">-2,969.43</div>
<div class="t " style="left:904.20px;top:371.00px;font-size:13px;line-height:13px;color:#111;transform:scaleX(1.0100);transform-origin:0 0;font-family:'Liberation Sans',sans-serif;">DIRNA02111-000001</div>
<div class="t " style="left:1055.22px;top:371.00px;font-size:13px;line-height:13px;color:#111;transform:scaleX(1.0100);transform-origin:0 0;font-family:'Liberation Sans',sans-serif;">-22,226.78</div>
<div class="t " style="left:904.20px;top:391.00px;font-size:13px;line-height:13px;color:#111;transform:scaleX(1.0100);transform-origin:0 0;font-family:'Liberation Sans',sans-serif;">DIRNA02111-000002</div>
<div class="t " style="left:1055.22px;top:391.00px;font-size:13px;line-height:13px;color:#111;transform:scaleX(1.0100);transform-origin:0 0;font-family:'Liberation Sans',sans-serif;">-40,369.52</div>
<div class="t " style="left:904.20px;top:411.00px;font-size:13px;line-height:13px;color:#111;transform:scaleX(1.0100);transform-origin:0 0;font-family:'Liberation Sans',sans-serif;">DIRNA02111-000003</div>
<div class="t " style="left:1055.22px;top:411.00px;font-size:13px;line-height:13px;color:#111;transform:scaleX(1.0100);transform-origin:0 0;font-family:'Liberation Sans',sans-serif;">-58,332.41</div>
<div class="t " style="left:904.20px;top:431.00px;font-size:13px;line-height:13px;color:#111;transform:scaleX(1.0100);transform-origin:0 0;font-family:'Liberation Sans',sans-serif;">DIRNA02211-000037</div>
<div class="t " style="left:1055.22px;top:431.00px;font-size:13px;line-height:13px;color:#111;transform:scaleX(1.0100);transform-origin:0 0;font-family:'Liberation Sans',sans-serif;">-10,979.01</div>
<div class="t " style="left:904.20px;top:451.00px;font-size:13px;line-height:13px;color:#111;transform:scaleX(1.0100);transform-origin:0 0;font-family:'Liberation Sans',sans-serif;">DIRNA02211-000038</div>
<div class="t " style="left:1055.22px;top:451.00px;font-size:13px;line-height:13px;color:#111;transform:scaleX(1.0100);transform-origin:0 0;font-family:'Liberation Sans',sans-serif;">-17,849.73</div>
<div class="t " style="left:904.20px;top:471.00px;font-size:13px;line-height:13px;color:#111;transform:scaleX(1.0100);transform-origin:0 0;font-family:'Liberation Sans',sans-serif;">DIRNA02211-000039</div>
<div class="t " style="left:1056.19px;top:471.00px;font-size:13px;line-height:13px;color:#111;transform:scaleX(1.0100);transform-origin:0 0;font-family:'Liberation Sans',sans-serif;">-11,201.29</div>
<div class="t " style="left:904.20px;top:491.00px;font-size:13px;line-height:13px;color:#111;transform:scaleX(1.0100);transform-origin:0 0;font-family:'Liberation Sans',sans-serif;">DIRNA02311-000073</div>
<div class="t " style="left:1055.22px;top:491.00px;font-size:13px;line-height:13px;color:#111;transform:scaleX(1.0100);transform-origin:0 0;font-family:'Liberation Sans',sans-serif;">-19,951.36</div>
<div class="t " style="left:904.20px;top:511.00px;font-size:13px;line-height:13px;color:#111;transform:scaleX(1.0100);transform-origin:0 0;font-family:'Liberation Sans',sans-serif;">DIRNA02311-000074</div>
<div class="t " style="left:1055.22px;top:511.00px;font-size:13px;line-height:13px;color:#111;transform:scaleX(1.0100);transform-origin:0 0;font-family:'Liberation Sans',sans-serif;">-19,957.42</div>
<div class="t " style="left:904.20px;top:531.00px;font-size:13px;line-height:13px;color:#111;transform:scaleX(1.0100);transform-origin:0 0;font-family:'Liberation Sans',sans-serif;">DIRNA02311-000075</div>
<div class="t " style="left:1055.22px;top:531.00px;font-size:13px;line-height:13px;color:#111;transform:scaleX(1.0100);transform-origin:0 0;font-family:'Liberation Sans',sans-serif;">-21,551.83</div>
<div class="t " style="left:904.20px;top:551.00px;font-size:13px;line-height:13px;color:#111;transform:scaleX(1.0100);transform-origin:0 0;font-family:'Liberation Sans',sans-serif;">NA0211303INV000001</div>
<div class="t " style="left:1055.22px;top:551.00px;font-size:13px;line-height:13px;color:#111;transform:scaleX(1.0100);transform-origin:0 0;font-family:'Liberation Sans',sans-serif;">-68,626.37</div>
<div class="t " style="left:904.20px;top:571.00px;font-size:13px;line-height:13px;color:#111;transform:scaleX(1.0100);transform-origin:0 0;font-family:'Liberation Sans',sans-serif;">NA0211303INV000002</div>
<div class="t " style="left:1055.22px;top:571.00px;font-size:13px;line-height:13px;color:#111;transform:scaleX(1.0100);transform-origin:0 0;font-family:'Liberation Sans',sans-serif;">-70,772.46</div>
<div class="t " style="left:904.20px;top:591.00px;font-size:13px;line-height:13px;color:#111;transform:scaleX(1.0100);transform-origin:0 0;font-family:'Liberation Sans',sans-serif;">NA0211303INV000051</div>
<div class="t " style="left:1047.91px;top:591.00px;font-size:13px;line-height:13px;color:#111;transform:scaleX(1.0100);transform-origin:0 0;font-family:'Liberation Sans',sans-serif;">-420,131.59</div>
<div class="t " style="left:904.20px;top:611.00px;font-size:13px;line-height:13px;color:#111;transform:scaleX(1.0100);transform-origin:0 0;font-family:'Liberation Sans',sans-serif;">NA0211303INV000052</div>
<div class="t " style="left:1047.91px;top:611.00px;font-size:13px;line-height:13px;color:#111;transform:scaleX(1.0100);transform-origin:0 0;font-family:'Liberation Sans',sans-serif;">-433,328.23</div>
<div class="t " style="left:904.20px;top:631.00px;font-size:13px;line-height:13px;color:#111;transform:scaleX(1.0100);transform-origin:0 0;font-family:'Liberation Sans',sans-serif;">NA0221302INV000001</div>
<div class="t " style="left:1055.22px;top:631.00px;font-size:13px;line-height:13px;color:#111;transform:scaleX(1.0100);transform-origin:0 0;font-family:'Liberation Sans',sans-serif;">-75,278.84</div>
<div class="t " style="left:904.20px;top:651.00px;font-size:13px;line-height:13px;color:#111;transform:scaleX(1.0100);transform-origin:0 0;font-family:'Liberation Sans',sans-serif;">NA0221302INV000002</div>
<div class="t " style="left:1055.22px;top:651.00px;font-size:13px;line-height:13px;color:#111;transform:scaleX(1.0100);transform-origin:0 0;font-family:'Liberation Sans',sans-serif;">-75,278.84</div>
<div class="t " style="left:904.20px;top:671.00px;font-size:13px;line-height:13px;color:#111;transform:scaleX(1.0100);transform-origin:0 0;font-family:'Liberation Sans',sans-serif;">NA0231302INV000001</div>
<div class="t " style="left:1055.22px;top:671.00px;font-size:13px;line-height:13px;color:#111;transform:scaleX(1.0100);transform-origin:0 0;font-family:'Liberation Sans',sans-serif;">-98,816.92</div>
<div class="t " style="left:904.20px;top:691.00px;font-size:13px;line-height:13px;color:#111;transform:scaleX(1.0100);transform-origin:0 0;font-family:'Liberation Sans',sans-serif;">NA0231302INV000002</div>
<div class="t " style="left:1055.22px;top:691.00px;font-size:13px;line-height:13px;color:#111;transform:scaleX(1.0100);transform-origin:0 0;font-family:'Liberation Sans',sans-serif;">-95,902.32</div>
<div class="a" style="left:903px;top:705px;width:478px;height:1px;background:#000"></div>
<div class="a" style="left:903px;top:707px;width:478px;height:1px;background:#000"></div>
<div class="a" style="left:1042px;top:708px;width:1px;height:17px;background:#d4d4d4"></div>
<div class="a" style="left:1120px;top:708px;width:1px;height:17px;background:#d4d4d4"></div>
<div class="a" style="left:903px;top:725px;width:478px;height:2px;background:#000"></div>
<div class="t " style="left:1025.40px;top:711.00px;font-size:13px;line-height:13px;color:#111;transform:scaleX(1.0100);transform-origin:0 0;font-family:'Liberation Sans',sans-serif;">18</div>
<div class="t " style="left:1045.50px;top:711.00px;font-size:13px;line-height:13px;color:#111;font-family:'Liberation Sans',sans-serif;">##########</div>
<div class="a" style="left:902px;top:325px;width:142px;height:23px;border:2px solid #217346"></div>
<div class="a" style="left:1040px;top:344px;width:5px;height:5px;background:#217346"></div>
<div class="a" style="left:1381px;top:307px;width:1px;height:533px;background:#ababab"></div>
<div class="a" style="left:903px;top:839px;width:479px;height:1px;background:#ababab"></div>
<div class="a" style="left:1385px;top:307px;width:15px;height:532px;background:#e8e8e8"></div>
<div class="a" style="left:1385px;top:307px;width:15px;height:15px;background:#fff;border:1px solid #ababab"></div>
<svg style="left:1388px;top:311px" width="9" height="6" viewBox="0 0 9 6"><path d="M0.5 5 L4.5 1 L8.5 5 Z" fill="#666"/></svg>
<div class="a" style="left:1385px;top:322px;width:15px;height:285px;background:#fff;border:1px solid #ababab"></div>
<div class="a" style="left:1385px;top:824px;width:15px;height:15px;background:#fff;border:1px solid #ababab"></div>
<svg style="left:1388px;top:829px" width="9" height="6" viewBox="0 0 9 6"><path d="M0.5 1 L4.5 5 L8.5 1 Z" fill="#666"/></svg>
<div class="a" style="left:903px;top:845px;width:479px;height:16px;background:#e8e8e8"></div>
<div class="a" style="left:903px;top:845px;width:15px;height:16px;background:#fff;border:1px solid #ababab"></div>
<svg style="left:906px;top:849px" width="8" height="9" viewBox="0 0 8 9"><path d="M6 0.5 L1.5 4.5 L6 8.5 Z" fill="#666"/></svg>
<div class="a" style="left:918px;top:845px;width:223px;height:16px;background:#fff;border:1px solid #ababab"></div>
<div class="a" style="left:1367px;top:845px;width:15px;height:16px;background:#fff;border:1px solid #ababab"></div>
<svg style="left:1371px;top:849px" width="8" height="9" viewBox="0 0 8 9"><path d="M1.5 0.5 L6 4.5 L1.5 8.5 Z" fill="#666"/></svg>
<div class="a" style="left:1400px;top:40px;width:6px;height:187px;background:#f7f7f7"></div>
<div class="a" style="left:1406px;top:40px;width:38px;height:845px;background:#fff"></div>
<div class="a" style="left:1406px;top:40px;width:38px;height:40px;background:#2577c9"></div>
<svg style="left:1406px;top:40px" width="38" height="290" viewBox="1406 40 38 290"><circle cx="1426" cy="55.5" r="10.3" fill="none" stroke="#fff" stroke-width="1.2"/><path d="M1428.3 50.6 L1423.3 55.5 L1428.3 60.4" stroke="#fff" stroke-width="1.3" fill="none"/><g stroke="#2b2d48" stroke-width="1.2" fill="none" stroke-linejoin="round"><path d="M1420.4 90.3 H1432.6 L1437.6 95 V107 Q1437.6 109 1435.6 109 H1420.4 Q1418.4 109 1418.4 107 V92.3 Q1418.4 90.3 1420.4 90.3 Z"/><path d="M1422.5 105.7 V100 H1433.8 V105.7 M1430.7 93.6 V96.5"/><path d="M1423.4 137 H1418.4 V150.8 H1434.6 V144.6"/><path d="M1425 144.6 Q1427.5 136 1438.2 135.2 M1434.6 131.5 L1438.4 135.2 L1434.6 139.3"/><path d="M1417.8 171.3 H1438.2 L1430.3 182.5 V192 H1425.7 V182.5 Z"/><path d="M1418.2 222 A10.3 10.3 0 0 1 1437.6 218.4 M1438.6 212.8 L1437.6 218.2 L1432.2 217.6"/><path d="M1430 255.2 Q1431.2 254 1432.4 255.2 L1437.6 260.5 Q1438.8 261.7 1437.6 262.9 L1427 273.2 Q1425.8 274.4 1424.6 273.2 L1419.2 267.9 Q1418 266.7 1419.2 265.5 Z"/><path d="M1424.5 260.8 L1432.2 268.3 M1419 274.4 H1437.8"/><path d="M1428 294.6 V309.5 M1422.5 304 L1428 309.5 L1433.5 304 M1417.6 309.2 V313 Q1417.6 315.2 1419.8 315.2 H1436.2 Q1438.4 315.2 1438.4 313 V309.2"/></g><g fill="#e3ecf7"><rect x="1406" y="121" width="38" height="1"/><rect x="1406" y="161" width="38" height="1"/><rect x="1406" y="202" width="38" height="1"/><rect x="1406" y="243" width="38" height="1"/><rect x="1406" y="285" width="38" height="1"/><rect x="1406" y="325" width="38" height="1"/></g></svg>
<div class="a" style="left:1288px;top:221px;width:152px;height:25px;background:rgba(99,99,99,0.92);border-radius:5px;z-index:5"></div>
<div class="t " style="left:1296.00px;top:228.42px;font-size:12.5px;line-height:12.5px;color:#f2f2f2;font-weight:bold;transform:scaleX(0.8638);transform-origin:0 0;font-family:'Liberation Sans',sans-serif;z-index:6">Copy Table to a new Sheet</div>
<svg style="left:1340px;top:290px;z-index:6" width="26" height="30" viewBox="1340 290 26 30"><path d="M1349.3 308.3 V296 Q1349.3 294.2 1351 294.2 Q1352.7 294.2 1352.7 296 V300.5 Q1352.9 299.3 1354.1 299.3 Q1355.5 299.5 1355.5 300.8 V301.5 Q1355.9 300.3 1357 300.3 Q1358.5 300.4 1358.5 301.8 V302.5 Q1358.9 301.3 1360 301.3 Q1361.6 301.5 1361.6 303.5 V311 Q1361.6 317.4 1355.5 317.4 H1353.5 Q1350.5 317.4 1348.5 314.5 L1344.8 310 Q1343.8 308.3 1345.3 307.3 Q1346.8 306.4 1349.3 308.3 Z" fill="#fff" stroke="#1f2440" stroke-width="1.15" stroke-linejoin="round"/><path d="M1352.7 300.5 V304.7 M1355.5 301.5 V304.7 M1358.5 302.5 V304.7" stroke="#1f2440" stroke-width="1"/></svg></body></html>
